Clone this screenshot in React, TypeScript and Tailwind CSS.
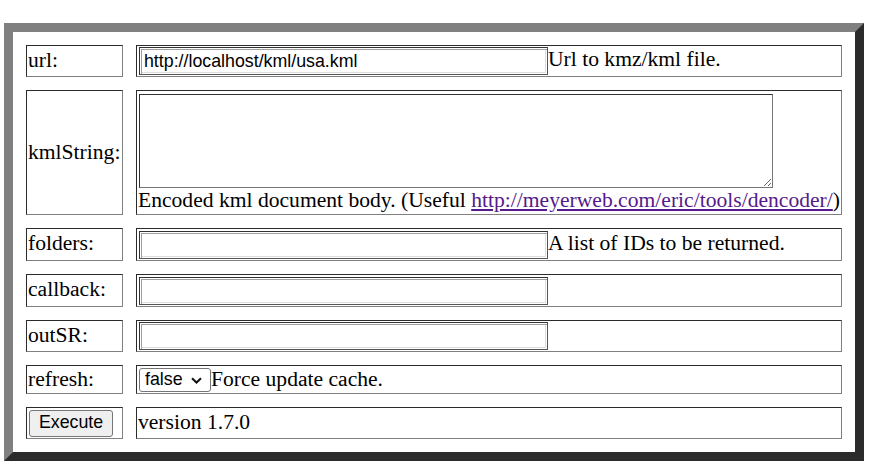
import { useState } from 'react';

// form rows of the kml service page, laid out as the original html table
const serif = "font-['Liberation_Serif','Times_New_Roman',serif]";
const sans = "font-['Liberation_Sans',Arial,sans-serif]";

const cellBorder = 'border border-t-[#2b2b2b] border-l-[#2b2b2b] border-b-[#808080] border-r-[#808080] p-[1px] align-middle';

function TextInput({ value = '' }: { value?: string }) {
  const [v, setV] = useState(value);
  return (
    <input
      type="text"
      value={v}
      onChange={(e) => setV(e.target.value)}
      className={`${sans} ml-[1px] h-[28px] w-[409px] shrink-0 border border-t-[#333] border-l-[#333] border-b-[#555] border-r-[#555] bg-white px-[4px] text-[17.8px] text-black shadow-[inset_1px_1px_0_#fff,inset_2px_2px_0_#a0a0a0,inset_-1px_-1px_0_#fff,inset_-2px_-2px_0_#dcdcdc] outline-none`}
    />
  );
}

export default function App() {
  const [refresh, setRefresh] = useState('false');

  return (
    <div className="min-h-[471px] w-[894px] bg-white pt-[23px] pl-[4px]">
      <table
        className={`${serif} w-[860px] border-separate border-spacing-[13px] border-[9px] border-t-[#808080] border-l-[#808080] border-b-[#2b2b2b] border-r-[#2b2b2b] text-[21.6px] leading-[1.15] text-black`}
      >
        <tbody>
          <tr>
            <td className={`${cellBorder} h-[32px] w-[97px] pb-[3px]`}>url:</td>
            <td className={`${cellBorder} h-[32px]`}>
              <div className="flex items-center">
                <TextInput value="http://localhost/kml/usa.kml" />
                <span className="-mt-[3px]">Url to kmz/kml file.</span>
              </div>
            </td>
          </tr>
          <tr>
            <td className={`${cellBorder} h-[125px] w-[97px] pb-[2px]`}>kmlString:</td>
            <td className={`${cellBorder} h-[125px]`}>
              <textarea className={`${sans} mt-[1px] ml-[1px] block h-[94px] w-[634px] border border-t-[#333] border-l-[#333] border-b-[#767676] border-r-[#767676] bg-white text-[17.8px] outline-none`} />
              <div className="whitespace-nowrap">
                Encoded kml document body. (Useful{' '}
                <a href="#" className="text-[#551a8b] underline">
                  http://meyerweb.com/eric/tools/dencoder/
                </a>
                )
              </div>
            </td>
          </tr>
          <tr>
            <td className={`${cellBorder} h-[33px] w-[97px] pb-[3px]`}>folders:</td>
            <td className={`${cellBorder} h-[33px]`}>
              <div className="flex items-center">
                <TextInput />
                <span className="-mt-[3px]">A list of IDs to be returned.</span>
              </div>
            </td>
          </tr>
          <tr>
            <td className={`${cellBorder} h-[33px] w-[97px] pb-[3px]`}>callback:</td>
            <td className={`${cellBorder} h-[33px]`}>
              <div className="flex items-center">
                <TextInput />
              </div>
            </td>
          </tr>
          <tr>
            <td className={`${cellBorder} h-[32px] w-[97px] pb-[3px]`}>outSR:</td>
            <td className={`${cellBorder} h-[32px]`}>
              <div className="flex items-center">
                <TextInput />
              </div>
            </td>
          </tr>
          <tr>
            <td className={`${cellBorder} h-[29px] w-[97px] pb-[1px]`}>refresh:</td>
            <td className={`${cellBorder} h-[29px]`}>
              <div className="flex items-center">
                <div className="relative ml-[1px] flex shrink-0">
                  <select
                    value={refresh}
                    onChange={(e) => setRefresh(e.target.value)}
                    className={`${sans} h-[24px] w-[72px] appearance-none rounded-[3px] border border-[#767676] bg-white pl-[5px] text-[17.8px] leading-none text-black outline-none`}
                  >
                    <option value="false">false</option>
                    <option value="true">true</option>
                  </select>
                  <svg
                    className="pointer-events-none absolute top-[9px] left-[52px]"
                    width="11"
                    height="7"
                    viewBox="0 0 11 7"
                  >
                    <path d="M1 1.2 L5.5 5.5 L10 1.2" fill="none" stroke="#111" strokeWidth="2" />
                  </svg>
                </div>
                <span className="-mt-[1px]">Force update cache.</span>
              </div>
            </td>
          </tr>
          <tr>
            <td className={`${cellBorder} h-[32px] w-[97px]`}>
              <button
                type="button"
                className={`${sans} ml-[1px] h-[27px] w-[84px] rounded-[3px] border border-[#767676] bg-[#efefef] text-[17.8px] leading-none text-black`}
              >
                Execute
              </button>
            </td>
            <td className={`${cellBorder} h-[32px] pb-[2px]`}>version 1.7.0</td>
          </tr>
        </tbody>
      </table>
    </div>
  );
}
